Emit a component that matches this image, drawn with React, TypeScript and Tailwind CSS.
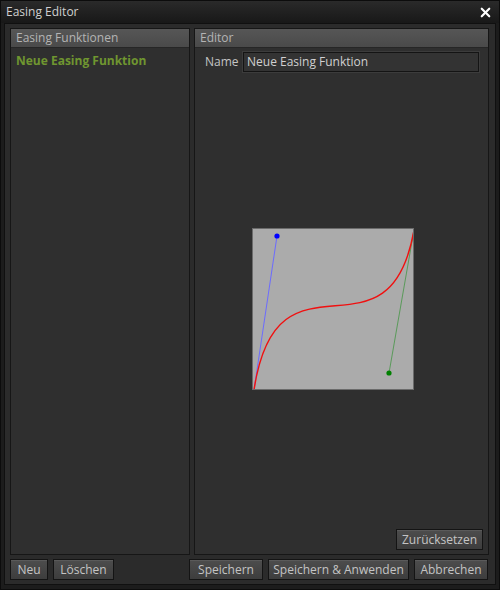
import { X } from 'lucide-react';

function Btn({ label, className = '' }: { label: string; className?: string }) {
  return (
    <button
      className={`h-[21px] border border-[#141414] bg-gradient-to-b from-[#4d4d4d] to-[#3d3d3d] text-[12px] leading-none text-[#c4c4c4] shadow-[inset_0_1px_0_#5a5a5a] ${className}`}
    >
      {label}
    </button>
  );
}

function PanelHeader({ title }: { title: string }) {
  return (
    <div className="h-[19px] border-b border-[#262626] bg-gradient-to-b from-[#565656] to-[#4a4a4a] px-[5px] text-[12px] leading-[18px] text-[#b4b4b4]">
      {title}
    </div>
  );
}

function Curve() {
  // box 160x160, y down
  const p0 = [0, 160];
  const p1 = [23, 6];
  const p2 = [135, 143];
  const p3 = [160, 0];
  return (
    <svg width="162" height="162" className="block border border-[#6b6b6b] bg-[#ababab]">
      <g transform="translate(1,1)">
        <line x1={p0[0]} y1={p0[1]} x2={p1[0]} y2={p1[1]} stroke="#6b6bff" strokeWidth="1" />
        <line x1={p3[0]} y1={p3[1]} x2={p2[0]} y2={p2[1]} stroke="#5a9a5a" strokeWidth="1" />
        <path
          d={`M${p0[0]} ${p0[1]} C${p1[0]} ${p1[1]} ${p2[0]} ${p2[1]} ${p3[0]} ${p3[1]}`}
          fill="none"
          stroke="#f01010"
          strokeWidth="1.4"
        />
        <circle cx={p1[0]} cy={p1[1]} r="2.6" fill="#0000ff" />
        <circle cx={p2[0]} cy={p2[1]} r="2.6" fill="#008000" />
      </g>
    </svg>
  );
}

export default function App() {
  return (
    <div
      className="flex h-[590px] w-[500px] flex-col border border-[#0c0c0c] bg-[#1c1c1c]"
      style={{ fontFamily: '"Open Sans", "DejaVu Sans", sans-serif' }}
    >
      <div className="flex h-[22px] items-center justify-between bg-gradient-to-b from-[#2a2a2a] to-[#181818] pl-[5px] pr-[6px] text-[12px] text-[#d0d0d0]">
        <span>Easing Editor</span>
        <X size={15} strokeWidth={3.5} className="text-white" />
      </div>
      <div className="flex flex-1 flex-col px-[3px] pb-[4px]">
        <div className="flex flex-1 flex-col border border-[#101010] bg-[#2b2b2b] pl-[5px] pr-[6px] pt-[4px] pb-[4px]">
          <div className="flex flex-1 gap-[4px]">
            <div className="flex w-[180px] flex-col border border-[#161616] bg-[#2f2f2f]">
              <PanelHeader title="Easing Funktionen" />
              <div className="px-[5px] pt-[4px] text-[12px] font-bold text-[#6f9630]">Neue Easing Funktion</div>
            </div>
            <div className="flex flex-1 flex-col border border-[#161616] bg-[#2f2f2f]">
              <PanelHeader title="Editor" />
              <div className="flex items-center pt-[4px] pl-[10px] pr-[9px]">
                <span className="w-[38px] text-[12px] text-[#c4c4c4]">Name</span>
                <div className="h-[20px] flex-1 border border-[#141414] bg-[#333333] px-[3px] text-[12px] leading-[18px] text-[#d0d0d0] shadow-[0_0_0_1px_#3c3c3c]">
                  Neue Easing Funktion
                </div>
              </div>
              <div className="flex flex-1 flex-col">
                <div className="ml-[57px] mt-[156px]">
                  <Curve />
                </div>
                <div className="mt-auto flex justify-end pr-[5px] pb-[4px]">
                  <Btn label="Zurücksetzen" className="w-[87px]" />
                </div>
              </div>
            </div>
          </div>
          <div className="mt-[4px] flex gap-[5px]">
            <Btn label="Neu" className="w-[38px]" />
            <Btn label="Löschen" className="w-[61px]" />
            <Btn label="Speichern" className="ml-[70px] w-[74px]" />
            <Btn label="Speichern & Anwenden" className="w-[141px]" />
            <Btn label="Abbrechen" className="w-[74px]" />
          </div>
        </div>
      </div>
    </div>
  );
}
